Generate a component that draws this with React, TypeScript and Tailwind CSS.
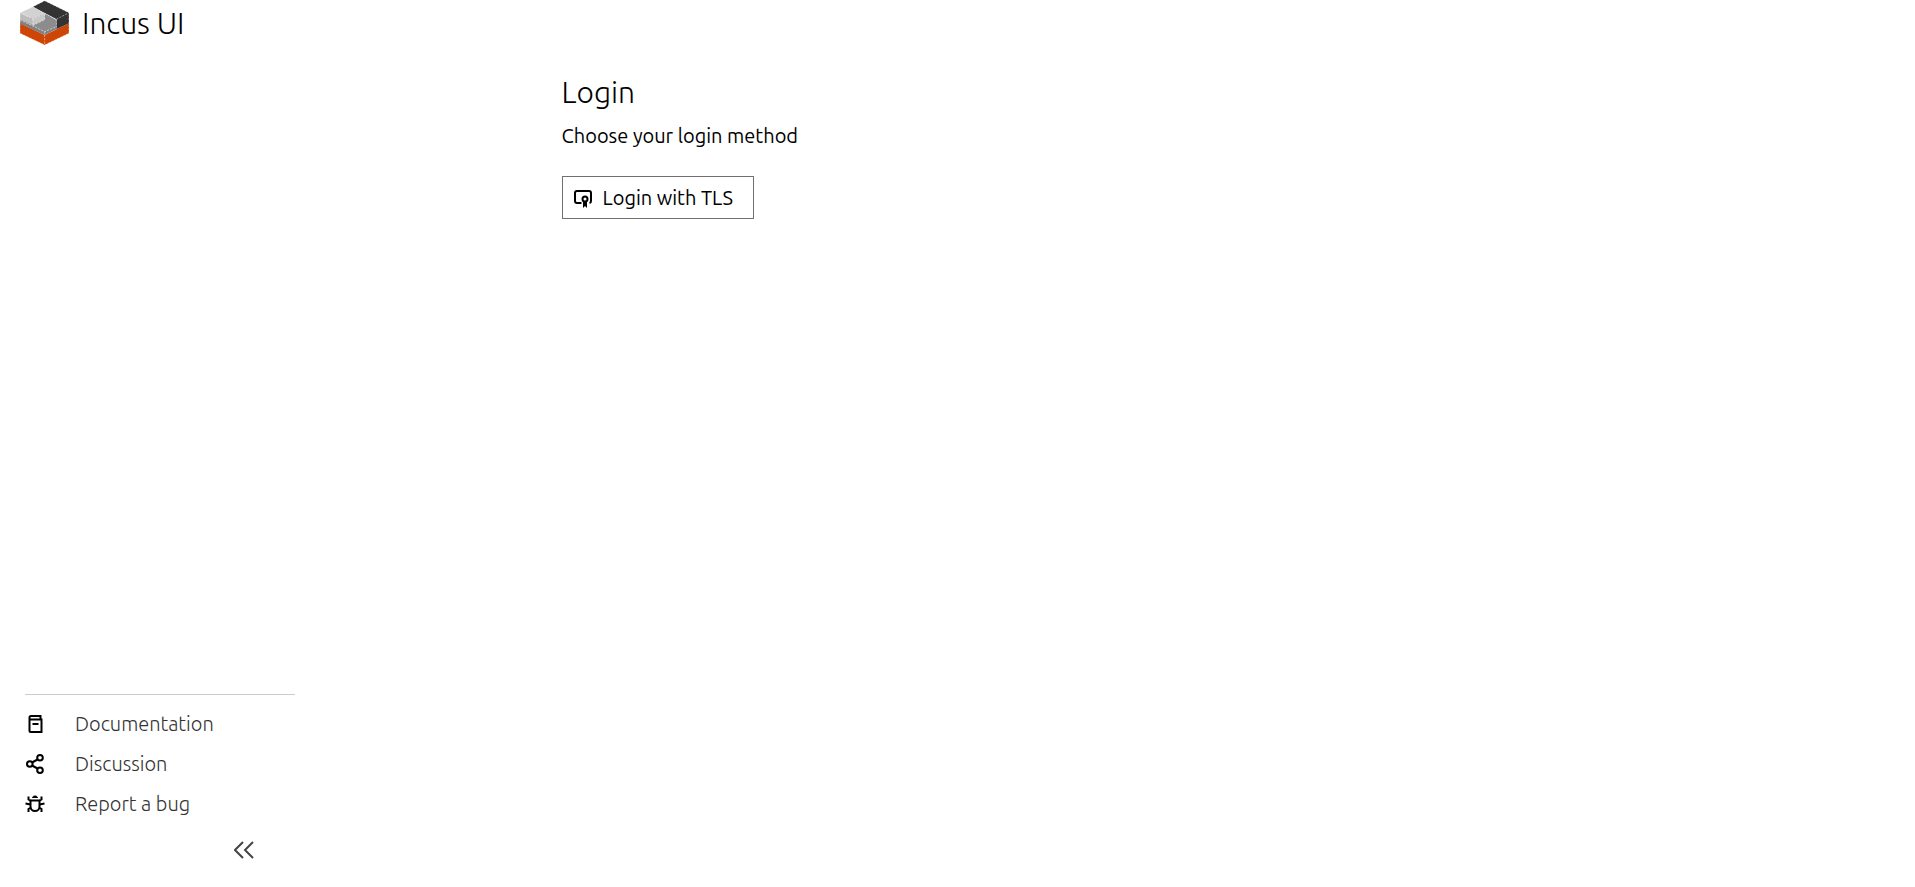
import React from 'react';

interface NavItem {
  label: string;
  href: string;
  icon: React.ReactNode;
}

function IncusLogo() {
  return (
    <svg viewBox="30 2 150 138" className="h-[46px] w-[50px]" aria-hidden="true">
      <path fill="#cf4505" d="M30 72 104 107 177 72V102L104 137 30 102Z" />
      <path fill="#333333" d="M69 22 104 4 177 40V72L139 90V60Z" />
      <path fill="#8c8c8c" d="M30 60 104 42 139 62V84L104 98Z" />
      <path fill="#808080" d="M30 60 104 97 139 82V90L104 107 30 73Z" />
      <path fill="#d2d2d2" d="M30 40 69 22 104 42 69 59Z" />
      <path fill="#bcbcbc" d="M30 40 69 59V78L30 60Z" />
      <path fill="#c8c8c8" d="M69 59 104 42V61L69 78Z" />
      <g fill="none" stroke="#ffffff" strokeOpacity="0.6" strokeWidth="2.5" strokeDasharray="6 4">
        <path d="M30 40 69 59 104 42M69 59V78M69 78 104 61V42" />
        <path d="M104 42 139 60 177 40M139 60V84" />
        <path d="M30 62 104 97 139 82M104 97V137" />
        <path d="M30 40 104 4 177 40V102L104 137 30 102Z" />
      </g>
    </svg>
  );
}

const iconClasses = 'h-5 w-5 shrink-0 text-black';

const navItems: NavItem[] = [
  {
    label: 'Documentation',
    href: '#documentation',
    icon: (
      <svg viewBox="0 0 20 20" className={iconClasses} fill="none" stroke="currentColor" strokeWidth="2" aria-hidden="true">
        <path d="M4.500 5V17a1 1 0 0 0 1 1H16.500V5.500H4.500V3.500a1.500 1.500 0 0 1 1.500-1.500H15.500V5.500M7.500 10H13.500" />
      </svg>
    ),
  },
  {
    label: 'Discussion',
    href: '#discussion',
    icon: (
      <svg viewBox="0 0 20 20" className={iconClasses} fill="none" stroke="currentColor" strokeWidth="2" aria-hidden="true">
        <circle cx="4.800" cy="10" r="2.800" />
        <circle cx="15" cy="3.800" r="2.800" />
        <circle cx="15" cy="16.200" r="2.800" />
        <path d="M7 8.500 12.500 5.500M7 11.500 12.500 14.500" />
      </svg>
    ),
  },
  {
    label: 'Report a bug',
    href: '#bug',
    icon: (
      <svg viewBox="0 0 20 20" className={iconClasses} fill="none" stroke="currentColor" strokeWidth="2" aria-hidden="true">
        <path d="M5.500 6.500H14.500V12.500a4.500 4.500 0 0 1-9 0Z" />
        <path d="M7.500 3.500C8 1.500 12 1.500 12.500 3.500Z" fill="currentColor" strokeWidth="1" />
        <path d="M6 7 3.500 5.500V2.500M14 7 16.500 5.500V2.500M5.500 10.500 0.500 9.500M14.500 10.500 19.500 9.500M6 13.500 3.500 15V18M14 13.500 16.500 15V18" />
      </svg>
    ),
  },
];

function CertificateIcon() {
  return (
    <svg viewBox="0 0 20 20" className={iconClasses} fill="none" stroke="currentColor" strokeWidth="2" aria-hidden="true">
      <path d="M8.500 15H4a2 2 0 0 1-2-2V5a2 2 0 0 1 2-2H16a2 2 0 0 1 2 2V13a2 2 0 0 1-1.500 2" />
      <circle cx="12" cy="11" r="2.500" />
      <path fill="currentColor" stroke="none" d="M10 13H14V20L12 18 10 20Z" />
    </svg>
  );
}

export default function App() {
  return (
    <div className="flex min-h-screen bg-white font-['Ubuntu','Noto_Sans',sans-serif] text-black">
      <aside className="flex w-80 shrink-0 flex-col">
        <a href="#home" className="flex items-center gap-3 pl-5">
          <IncusLogo />
          <span className="text-[30px] leading-[46px] font-light">Incus UI</span>
        </a>

        <div className="mt-auto px-[25px]">
          <hr className="border-[#cccccc]" />
          <nav className="mt-[9px]">
            <ul>
              {navItems.map((item) => (
                <li key={item.label}>
                  <a
                    href={item.href}
                    className="flex h-10 items-center gap-[30px] text-xl font-light text-[#333333]"
                  >
                    {item.icon}
                    {item.label}
                  </a>
                </li>
              ))}
            </ul>
          </nav>
          <div className="flex h-[63px] justify-end pt-4 pr-[41px]">
            <button type="button" aria-label="Collapse main navigation" className="flex h-5 w-5">
              <svg viewBox="0 0 20 20" className="h-5 w-5" fill="none" stroke="#444444" strokeWidth="2" aria-hidden="true">
                <path d="M9 2 1 10 9 18M19 2 11 10 19 18" />
              </svg>
            </button>
          </div>
        </div>
      </aside>

      <main className="min-w-0 grow pt-[72px]">
        <div className="mx-auto max-w-[1112px]">
          <h1 className="text-[30px] leading-10 font-light">Login</h1>
          <p className="mt-2 text-xl leading-8">Choose your login method</p>
          <button
            type="button"
            className="mt-6 flex h-[43px] items-center gap-[10px] border border-[#707070] pr-5 pl-[10px] text-xl"
          >
            <CertificateIcon />
            Login with TLS
          </button>
        </div>
      </main>
    </div>
  );
}
